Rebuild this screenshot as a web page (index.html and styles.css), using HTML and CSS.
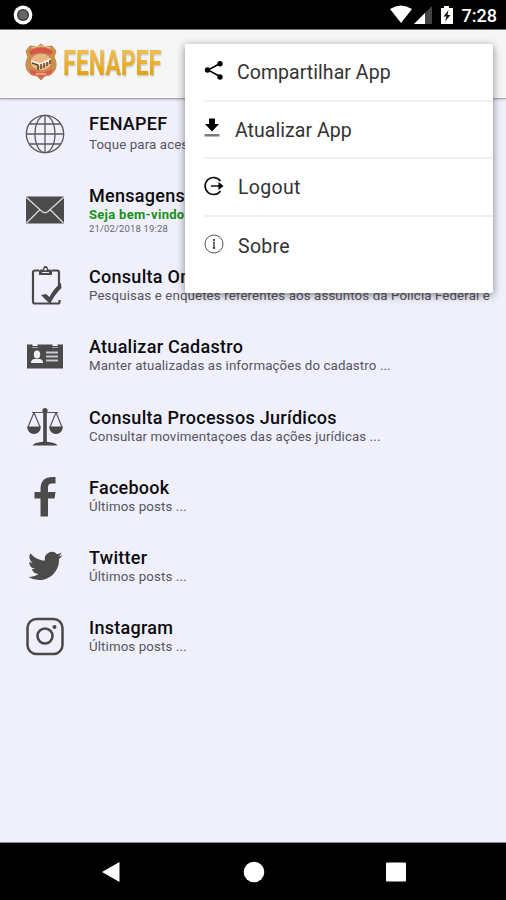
FILE: index.html
```html
<!DOCTYPE html>
<html lang="pt-BR">
<head>
<meta charset="utf-8">
<title>FENAPEF</title>
<link rel="stylesheet" href="styles.css">
</head>
<body>
<div class="screen">
  <header class="status">
    <svg class="record" width="20" height="20" viewBox="0 0 20 20"><circle cx="10" cy="10" r="9.400" fill="#fff"/><circle cx="10" cy="10" r="6" fill="#333"/><circle cx="10" cy="10" r="4.700" fill="#666"/></svg>
    <div class="status-icons">
      <svg width="66" height="20" viewBox="0 0 66 20">
        <path d="M1 4Q12 -3 23 4L12 18Z" fill="#fff"/>
        <path d="M43 1V19H25Z" fill="#444"/><path d="M36 8V19H25Z" fill="#fff"/>
        <path d="M55 1h5v2h4v16H52V3h3z" fill="#fff"/><path d="M59.500 5L54.500 11.500h3L56 16.500l5.500-6.500h-3z" fill="#111"/>
      </svg>
      <span class="clock">7:28</span>
    </div>
  </header>
  <div class="toolbar">
    <svg class="crest" width="32" height="38" viewBox="0 0 32 38">
      <path d="M16 1l4 3 7-1 4 5-2 6c4 8 2 14-4 18l-5 1-4 4-4-4-5-1C1 28-1 22 3 14L1 8l4-5 7 1z" fill="#cf914a" stroke="#b98a52"/>
      <path d="M4 8Q16 1 28 8l-2 4Q16 7 6 12z" fill="#d9544b"/>
      <path d="M7 5Q16 1 25 5" fill="none" stroke="#f2c69a"/>
      <ellipse cx="16" cy="19" rx="11" ry="9" fill="#e6b686" stroke="#bc7b38"/>
      <path d="M6 17l9 3 11-5-2 4-9 4-8-2z" fill="#fff0da"/>
      <path d="M7 20l6 2v5M16 21v5M19 20v5M22 19v4M25 17v4" fill="none" stroke="#5b4335" stroke-width="1.500"/>
      <path d="M4 26l6 2q6 3 12 0l6-2-2 5-6 1-4 3-4-3-6-1z" fill="#dc5a50"/>
      <path d="M11 31h10" stroke="#f3b09b" stroke-width="1.500"/>
    </svg>
    <h1 class="brand"><span>FENAPEF</span></h1>
  </div>
  <main class="list">
    <section class="row row-first">
      <svg class="icon" viewBox="0 0 40 40" fill="none" stroke="#58585d" stroke-width="1.300"><circle cx="20" cy="20" r="18.700"/><ellipse cx="20" cy="20" rx="10" ry="18.700"/><path d="M20 1v38M1 20h38M4 10h32M4 30h32"/></svg>
      <div class="copy"><h2>FENAPEF</h2><p>Toque para acessar o site ...</p></div>
    </section>
    <section class="row row-message">
      <svg class="icon" viewBox="0 0 40 40"><path d="M1 6.500h38v27H1z" fill="#4b4b4b"/><path d="M1 7l16 14.500q3 2.500 6 0L39 7M1.500 33L15 19.500M38.500 33L25 19.500" fill="none" stroke="#d6d6dc" stroke-width="1.400"/></svg>
      <div class="copy"><h2>Mensagens</h2><p class="welcome">Seja bem-vindo</p><time>21/02/2018 19:28</time></div>
    </section>
    <section class="row">
      <svg class="icon" viewBox="0 0 40 40"><path d="M14 4.500H10Q8 4.500 8 6.500v29q0 2 2 2h23q1.500 0 1.500-1.500v-2M27 4.500h5q2 0 2 2V20" fill="none" stroke="#484848" stroke-width="2.200"/><path d="M14 9V5q0-1.500 2-1.500h2Q18 0 20.500 0T23 3.500h2q2 0 2 1.500v4z" fill="#484848"/><circle cx="20.500" cy="3.300" r="1.200" fill="#f0f0fc"/><path d="M17 6.500h7" stroke="#e8e8f3"/><path d="M16 29l5-1 3.500 3Q29 22 36 17l.5 5Q30 28 25 38z" fill="#484848"/></svg>
      <div class="copy"><h2>Consulta Online</h2><p>Pesquisas e enquetes referentes aos assuntos da Polícia Federal e</p></div>
    </section>
    <section class="row">
      <svg class="icon" viewBox="0 0 40 40"><path d="M2 8.500h5v3h6v-3h14v3h6v-3h5v24H2z" fill="#4b4b4b"/><path d="M7 8.500v2h6v-2M27 8.500v2h6v-2" fill="none" stroke="#4b4b4b"/><ellipse cx="12" cy="18.500" rx="3.200" ry="4" fill="#f0f0fc"/><path d="M6 27q0-4 4-4h4q4 0 4 4z" fill="#f0f0fc"/><path d="M21 16.500h12M21 20.500h12M21 24.500h12" stroke="#c8c8cf" stroke-width="1.800"/></svg>
      <div class="copy"><h2>Atualizar Cadastro</h2><p>Manter atualizadas as informações do cadastro ...</p></div>
    </section>
    <section class="row">
      <svg class="icon" viewBox="0 0 40 40"><circle cx="20" cy="3.500" r="2.600" fill="#484848"/><path d="M20 3v34" stroke="#484848" stroke-width="3.600"/><path d="M7 5.500h26M9 5.500L3 20M9 5.500L15 20M31 5.500L25 20M31 5.500L37 20" fill="none" stroke="#57575a" stroke-width="1.200"/><path d="M2 19.500h14q-1 7.500-7 7.500t-7-7.500zM24 19.500h14q-1 7.500-7 7.500t-7-7.500zM7.500 38.500q1-3 12.500-4 11.500 1 12.500 4z" fill="#484848"/></svg>
      <div class="copy"><h2>Consulta Processos Jurídicos</h2><p>Consultar movimentaçoes das ações jurídicas ...</p></div>
    </section>
    <section class="row">
      <svg class="icon" viewBox="0 0 40 40"><path d="M15.500 39.500V21.500H9.500v-6.500h6V12q0-12 12-12h3v6.500h-4q-3.500 0-3.500 4V15h7.500L29.500 21.500H23v18z" fill="#4b4b4b"/></svg>
      <div class="copy"><h2>Facebook</h2><p>Últimos posts ...</p></div>
    </section>
    <section class="row">
      <svg class="icon" viewBox="0 0 40 40"><path transform="translate(3 1.700) scale(1.440)" d="M23.950 4.570a10 10 0 0 1-2.820.770 4.960 4.960 0 0 0 2.160-2.720c-.950.550-2 .950-3.130 1.180a4.920 4.920 0 0 0-8.380 4.480C7.690 8.090 4.070 6.130 1.640 3.160a4.920 4.920 0 0 0 1.520 6.570 4.900 4.900 0 0 1-2.230-.610v.060a4.920 4.920 0 0 0 3.950 4.830 5 5 0 0 1-2.210.080 4.940 4.940 0 0 0 4.600 3.420A9.870 9.870 0 0 1 0 19.540a13.990 13.990 0 0 0 7.550 2.210c9.050 0 14-7.500 14-13.980 0-.210 0-.420-.020-.630a9.940 9.940 0 0 0 2.420-2.570z" fill="#4b4b4b"/></svg>
      <div class="copy"><h2>Twitter</h2><p>Últimos posts ...</p></div>
    </section>
    <section class="row">
      <svg class="icon" viewBox="0 0 40 40" fill="none" stroke="#484848"><rect x="2.500" y="2" width="35" height="35" rx="9" stroke-width="2.500"/><circle cx="20" cy="19" r="7.500" stroke-width="2.600"/><circle cx="29.500" cy="10" r="2" fill="#484848" stroke="none"/></svg>
      <div class="copy"><h2>Instagram</h2><p>Últimos posts ...</p></div>
    </section>
  </main>
  <nav class="navbar">
    <svg width="22" height="22" viewBox="0 0 22 22"><path d="M2 11L19.500 1v20z" fill="#fff"/></svg>
    <svg width="22" height="22" viewBox="0 0 22 22"><circle cx="11" cy="11" r="10.300" fill="#fff"/></svg>
    <svg width="22" height="22" viewBox="0 0 22 22"><rect x="1" y="1.500" width="20" height="19" rx="1" fill="#fff"/></svg>
  </nav>
  <div class="menu">
    <div class="item"><svg width="20" height="20" viewBox="0 0 20 20"><path d="M17 3L4 10l13 7" fill="none" stroke="#000" stroke-width="1.600"/><circle cx="16" cy="3.700" r="2.700"/><circle cx="3.500" cy="10" r="2.700"/><circle cx="16" cy="17" r="2.700"/></svg><span class="share">Compartilhar App</span></div>
    <div class="item"><svg width="20" height="20" viewBox="0 0 20 20"><path d="M5 .500h6V6h4L8 13.500 1 6h4z"/><path d="M.500 17.300H15.500" stroke="#777" stroke-width="2.400"/></svg><span class="update">Atualizar App</span></div>
    <div class="item"><svg width="20" height="20" viewBox="0 0 20 20"><path d="M16.500 5a8.500 8.500 0 1 0 0 10M7 10h10" fill="none" stroke="#111" stroke-width="1.700"/><path d="M14.500 6l5 4-5 4z"/></svg><span class="logout">Logout</span></div>
    <div class="item"><svg width="20" height="20" viewBox="0 0 20 20"><circle cx="10" cy="10" r="9" fill="none" stroke="#555"/><path d="M9 8.500H10V14M8.800 14h2.400" fill="none" stroke="#333" stroke-width="1.300"/><circle cx="10" cy="6" r=".9"/></svg><span class="about">Sobre</span></div>
  </div>
</div>
</body>
</html>
```

FILE: styles.css
```css
* { box-sizing: border-box; }
body { margin: 0; font-family: Roboto, "Liberation Sans", sans-serif; }
h1, h2, p { margin: 0; }
svg { display: block; flex: none; }
.screen { position: relative; width: 506px; height: 900px; display: flex; flex-direction: column; overflow: hidden; background: #f0f0fc; }
.status { height: 30px; flex: none; display: flex; align-items: center; justify-content: space-between; padding: 0 9px 0 13px; background: #000; border-bottom: 1px solid #777; }
.status-icons { display: flex; align-items: center; gap: 7px; }
.clock { color: #fff; font-size: 18px; font-weight: 500; line-height: 28px; margin-top: 2px; }
.toolbar { height: 69px; flex: none; display: flex; align-items: flex-start; padding: 13px 0 0 25px; background: #f6f6f6; border-bottom: 1px solid #aaa; box-shadow: 0 1px 2px #0003; }
.brand { margin-left: 6px; width: 100px; height: 38px; font-size: 35px; line-height: 41px; font-weight: 700; color: #e9ad28; }
.brand span { display: block; transform: scaleX(.66); transform-origin: left; background: linear-gradient(#f0bd51 20%, #e3a10c 80%); background-clip: text; color: transparent; filter: drop-shadow(1px 1px 1px #8888); width: max-content; }
.list { flex: 1; min-height: 0; }
.row { height: 70.200px; display: flex; align-items: center; gap: 24px; padding: 0 12px 0 25px; }
.row-message { height: 82px; }
.icon { width: 40px; height: 40px; }
.copy { flex: 1; min-width: 0; white-space: nowrap; }
h2 { font-size: 18px; line-height: 20px; font-weight: 500; letter-spacing: .28px; color: #0b0b0d; }
p { font-size: 13.300px; line-height: 18px; letter-spacing: .11px; color: #55555d; }
.row-first p { line-height: 20px; padding-top: 1px; }
.welcome { font-weight: 700; font-size: 13px; letter-spacing: .3px; color: #159119; }
time { display: block; font-size: 9.500px; line-height: 10px; letter-spacing: .15px; color: #65656d; }
.navbar { height: 58px; flex: none; display: flex; align-items: center; justify-content: space-between; padding: 0 99px 0 100px; background: #000; border-top: 1px solid #888; }
.menu { position: absolute; left: 185px; top: 44px; width: 308px; height: 249px; padding-left: 19px; background: #fff; border-radius: 2px; box-shadow: 0 2px 8px #0007; }
.item { height: 57.700px; display: flex; align-items: center; border-bottom: 2px solid #f0f0f0; font-size: 19.500px; letter-spacing: .05px; color: #333; }
.item:last-child { border-bottom: 0; }
.item svg { margin-top: -3px; }
.item span { padding-top: 1px; }
.share { margin-left: 13px; }
.update { margin-left: 11px; }
.logout, .about { margin-left: 14px; letter-spacing: .3px; }
```
